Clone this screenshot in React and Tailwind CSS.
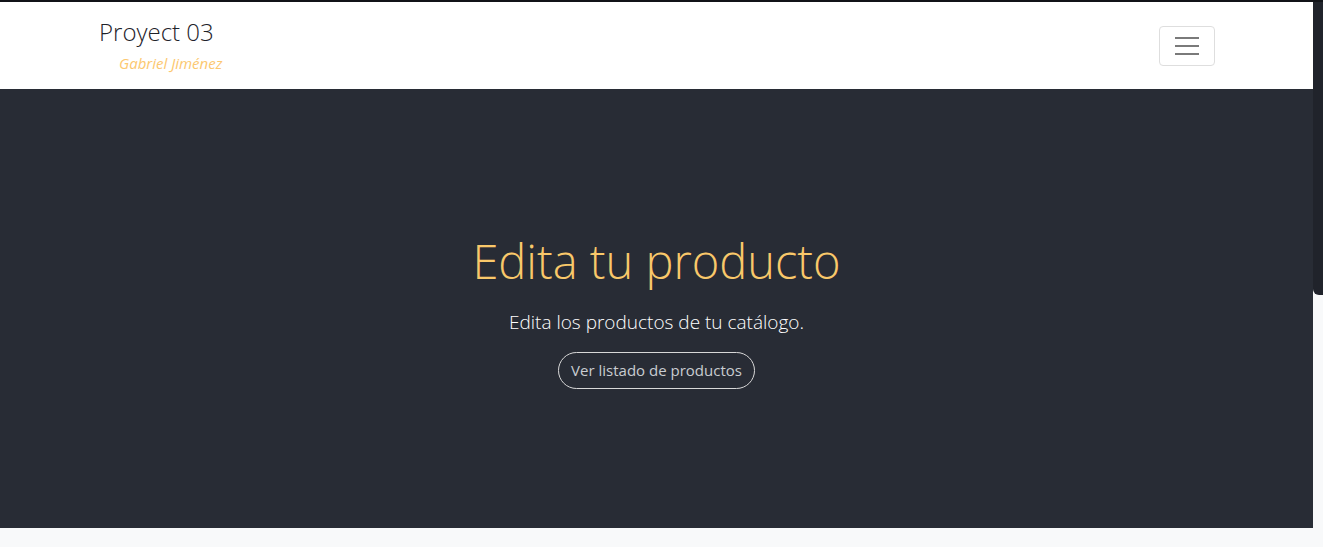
export default function App() {
  const font = { fontFamily: '"Open Sans", "Noto Sans", sans-serif' };
  return (
    <div className="flex h-[547px] w-[1323px] overflow-hidden bg-[#f8f9fa]" style={font}>
      <div className="flex w-[1313px] flex-col">
        <div className="h-[2px] bg-[#111318]" />
        <nav className="flex h-[87px] items-start justify-between bg-white px-[99px] pt-[12px]">
          <div className="flex flex-col">
            <span className="text-[24px] font-light leading-[36px] text-[#1e2229]">Proyect 03</span>
            <span className="ml-[20px] mt-[2px] text-[15px] italic leading-[22px] text-[#fcc870]">Gabriel Jiménez</span>
          </div>
          <button className="mr-[-1px] mt-[12px] flex h-[40px] w-[56px] flex-col items-center justify-center gap-[6px] rounded-[4px] border border-[#dedede]">
            <span className="h-[2px] w-[24px] bg-[#7a7a7a]" />
            <span className="h-[2px] w-[24px] bg-[#7a7a7a]" />
            <span className="h-[2px] w-[24px] bg-[#7a7a7a]" />
          </button>
        </nav>
        <section className="flex h-[439px] flex-col items-center justify-center bg-[#282c35] pt-[4px]">
          <h1 className="text-[47px] font-light leading-[58px] text-[#f9c86a]">Edita tu producto</h1>
          <p className="mt-[17px] text-[19px] font-light leading-[30px] text-white">Edita los productos de tu catálogo.</p>
          <button className="mt-[15px] h-[37px] rounded-full border border-[#d8d8d8] px-[12px] text-[15px] font-medium text-[#c9ccd1]">
            Ver listado de productos
          </button>
        </section>
      </div>
      <div className="flex w-[10px] flex-col">
        <div className="h-[2px] bg-[#111318]" />
        <div className="h-[293px] rounded-bl-[6px] bg-[#20232b]" />
      </div>
    </div>
  );
}
